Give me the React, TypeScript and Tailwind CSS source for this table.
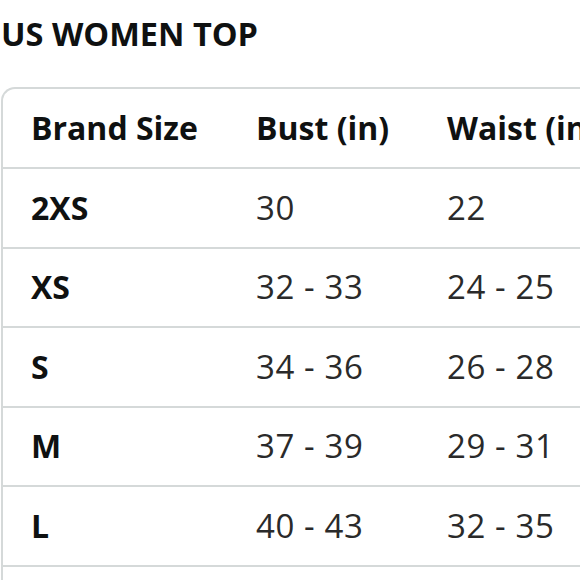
const rows = [
  { size: "2XS", bust: "30", waist: "22", hip: "32" },
  { size: "XS", bust: "32 - 33", waist: "24 - 25", hip: "34 - 35" },
  { size: "S", bust: "34 - 36", waist: "26 - 28", hip: "36 - 38" },
  { size: "M", bust: "37 - 39", waist: "29 - 31", hip: "39 - 41" },
  { size: "L", bust: "40 - 43", waist: "32 - 35", hip: "42 - 45" },
  { size: "XL", bust: "44 - 47", waist: "36 - 39", hip: "46 - 49" },
];

const App = () => {
  return (
    <div
      className="h-[580px] w-[580px] overflow-hidden bg-white text-[#0f1111]"
      style={{ fontFamily: '"Open Sans", "Noto Sans", sans-serif' }}
    >
      <h1 className="pl-[1px] pt-[17px] text-[32.5px] font-bold leading-[34px]">
        US WOMEN TOP
      </h1>

      <div className="ml-[1px] mt-[36px] w-[860px] whitespace-nowrap rounded-tl-[14px] border-l-2 border-t-2 border-[#d5d9d9]">
        <div className="grid h-[80px] grid-cols-[225px_191px_200px_1fr] items-center border-b-2 border-[#d5d9d9] pl-[28px] text-[32px] leading-[40px] font-bold">
          <span>Brand Size</span>
          <span>Bust (in)</span>
          <span>Waist (in)</span>
          <span>Hip (in)</span>
        </div>
        {rows.map((row) => (
          <div
            key={row.size}
            className="grid h-[79.5px] grid-cols-[225px_191px_200px_1fr] items-center border-b-2 border-[#d5d9d9] pl-[28px] text-[32px] leading-[40px]"
          >
            <span className="font-bold">{row.size}</span>
            <span className="text-[33px] tracking-[0.6px] text-[#2a2a2a]">{row.bust}</span>
            <span className="text-[33px] tracking-[0.6px] text-[#2a2a2a]">{row.waist}</span>
            <span className="text-[33px] tracking-[0.6px] text-[#2a2a2a]">{row.hip}</span>
          </div>
        ))}
      </div>
    </div>
  );
};

export default App;
